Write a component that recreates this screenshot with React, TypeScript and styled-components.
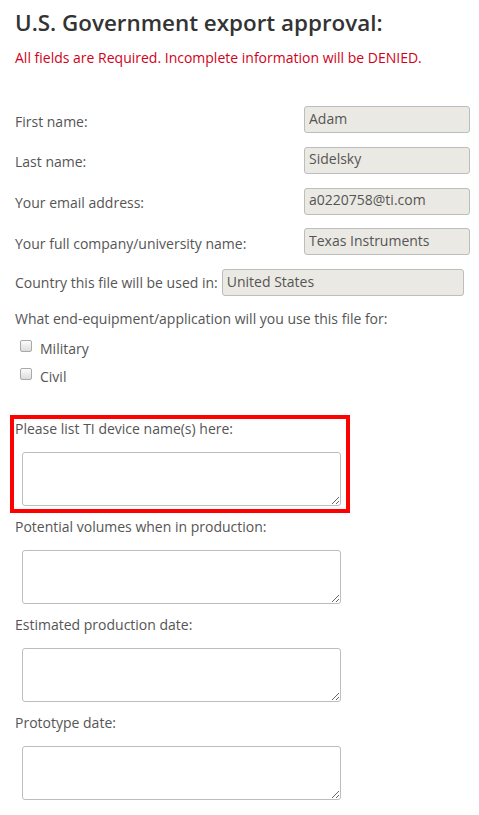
import React from "react";
import styled, { createGlobalStyle } from "styled-components";

const GlobalStyle = createGlobalStyle`
	body {
		margin: 0;
		background: #fff;
		font-family: "Open Sans", "Liberation Sans", sans-serif;
	}
`;

interface Row {
	label: string;
	value: string;
}

const rows: Row[] = [
	{ label: "First name:", value: "Adam" },
	{ label: "Last name:", value: "Sidelsky" },
	{ label: "Your email address:", value: "a0220758@ti.com" },
	{ label: "Your full company/university name:", value: "Texas Instruments" },
];

const questions = [
	"Please list TI device name(s) here:",
	"Potential volumes when in production:",
	"Estimated production date:",
	"Prototype date:",
];

const App = () => {
	return (
		<>
			<GlobalStyle />
			<PageTag>
				<Title>U.S. Government export approval:</Title>
				<Warning>
					All fields are Required. Incomplete information will be DENIED.
				</Warning>
				<InfoRows>
					{rows.map((row) => (
						<InfoRow key={row.label}>
							<RowLabel>{row.label}</RowLabel>
							<ReadOnlyInput value={row.value} readOnly />
						</InfoRow>
					))}
					<CountryRow>
						<span>Country this file will be used in:</span>
						<ReadOnlyInput value="United States" readOnly $wide />
					</CountryRow>
				</InfoRows>
				<Question>
					What end-equipment/application will you use this file for:
				</Question>
				<CheckList>
					<CheckRow>
						<CheckBox type="checkbox" />
						Military
					</CheckRow>
					<CheckRow>
						<CheckBox type="checkbox" />
						Civil
					</CheckRow>
				</CheckList>
				{questions.map((q, i) => (
					<FieldBlock key={q} $highlighted={i === 0}>
						<BlockLabel>{q}</BlockLabel>
						<TextBox />
					</FieldBlock>
				))}
			</PageTag>
		</>
	);
};

export default App;

const PageTag = styled.div`
	padding: 8px 0 20px 15px;
	color: #555;
	font-size: 14px;
`;

const Title = styled.h1`
	margin: 0;
	font-size: 22.4px;
	line-height: 30px;
	font-weight: 600;
	color: #333;
`;

const Warning = styled.p`
	margin: 10px 0 0;
	font-size: 14px;
	line-height: 20px;
	color: #d0021b;
`;

const InfoRows = styled.div`
	margin-top: 38px;
	display: flex;
	flex-direction: column;
	row-gap: 13.75px;
`;

const InfoRow = styled.div`
	display: flex;
	align-items: center;
`;

const RowLabel = styled.span`
	width: 289px;
	padding-top: 3px;
`;

const CountryRow = styled.div`
	display: flex;
	align-items: center;
	column-gap: 4px;
`;

const ReadOnlyInput = styled.input<{ $wide?: boolean }>`
	box-sizing: border-box;
	width: ${(p) => (p.$wide ? "242px" : "166px")};
	height: 27px;
	padding: 0 4px 3px;
	border: 1px solid #bdbdbd;
	border-radius: 3px;
	background: #ebe9e3;
	font-family: "Open Sans", "Liberation Sans", sans-serif;
	font-size: 14px;
	color: #555;
	outline: none;
`;

const Question = styled.div`
	margin-top: 13px;
	line-height: 20px;
`;

const CheckList = styled.div`
	margin-top: 5px;
	display: flex;
	flex-direction: column;
`;

const CheckRow = styled.label`
	display: flex;
	align-items: center;
	height: 28px;
	padding-left: 5px;
	column-gap: 8px;
`;

const CheckBox = styled.input`
	appearance: none;
	margin: 0 0 4px;
	width: 12px;
	height: 12px;
	border: 1px solid #a9a9a9;
	border-radius: 2px;
	background: linear-gradient(#fcfcfc, #dcdcdc);
`;

const FieldBlock = styled.div<{ $highlighted?: boolean }>`
	width: 331px;
	margin-left: -5px;
	padding: 0 0 3px 1px;
	border: 4px solid ${(p) => (p.$highlighted ? "#f00" : "transparent")};
	margin-top: ${(p) => (p.$highlighted ? "25px" : "0")};
`;

const BlockLabel = styled.div`
	line-height: 20px;
`;

const TextBox = styled.textarea`
	display: block;
	box-sizing: border-box;
	width: 319px;
	height: 54px;
	margin: 13px 0 0 7px;
	border: 1px solid #bdbdbd;
	border-radius: 3px;
	background: #fff;
	font-family: "Open Sans", "Liberation Sans", sans-serif;
	font-size: 14px;
	color: #555;
	outline: none;
`;
